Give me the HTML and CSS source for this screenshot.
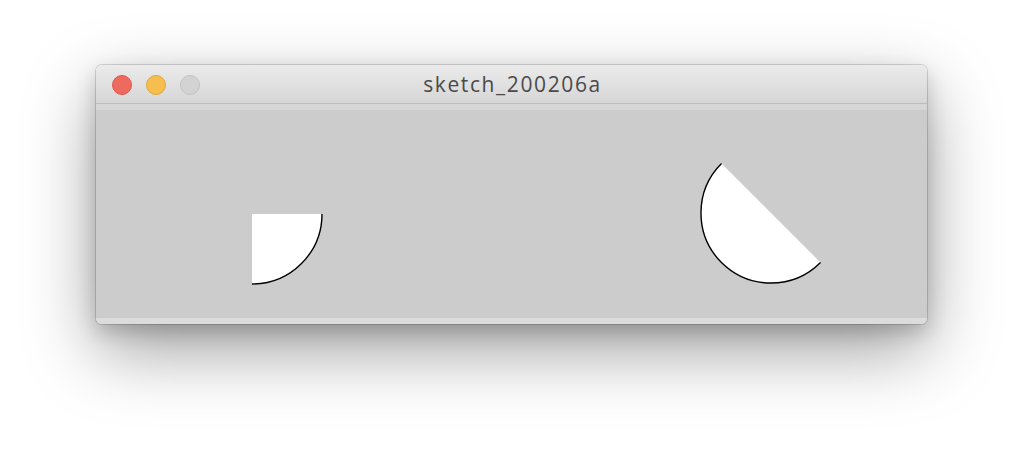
FILE: index.html
```html
<!DOCTYPE html>
<html lang="en">
<head>
    <meta charset="UTF-8">
    <title>sketch_200206a</title>
    <link rel="stylesheet" href="styles.css">
</head>
<body>
    <div class="window">
        <div class="titlebar">
            <div class="lights">
                <span class="light close"></span>
                <span class="light minimize"></span>
                <span class="light zoom"></span>
            </div>
            <div class="title">sketch_200206a</div>
        </div>
        <div class="strip"></div>
        <div class="canvas">
            <svg width="831" height="208" viewBox="0 0 831 208">
                <path d="M156 104 L226 104 A70 70 0 0 1 156 174 Z" fill="#fff"/>
                <path d="M226 104 A70 70 0 0 1 156 174" fill="none" stroke="#000" stroke-width="1.4"/>
                <path d="M724.5 152.5 A70 70 0 1 1 625.5 53.5 Z" fill="#fff"/>
                <path d="M724.5 152.5 A70 70 0 1 1 625.5 53.5" fill="none" stroke="#000" stroke-width="1.4"/>
            </svg>
        </div>
        <div class="strip bottom"></div>
    </div>
</body>
</html>
```

FILE: styles.css
```css
html {
    height: 100%;
}
body {
    margin: 0;
    height: 100%;
    box-sizing: border-box;
    padding: 65px 0 0 96px;
    background-color: #ffffff;
    font-family: "Open Sans", "Liberation Sans", sans-serif;
}
.window {
    width: 831px;
    border-radius: 6px;
    overflow: hidden;
    box-shadow: 0 0 0 1px rgba(0, 0, 0, 0.14), 0 8px 20px rgba(0, 0, 0, 0.18), 0 26px 70px rgba(0, 0, 0, 0.38);
}
.titlebar {
    position: relative;
    height: 38px;
    display: flex;
    align-items: center;
    justify-content: center;
    background: linear-gradient(#ebebeb, #d6d6d6);
    border-bottom: 1px solid #bdbdbd;
}
.lights {
    position: absolute;
    left: 16px;
    top: 10px;
    display: flex;
    gap: 14px;
}
.light {
    width: 20px;
    height: 20px;
    border-radius: 50%;
    box-sizing: border-box;
}
.close {
    background-color: #ee6a5f;
    border: 1px solid #e0574c;
}
.minimize {
    background-color: #f5be4f;
    border: 1px solid #e1a73c;
}
.zoom {
    background-color: #d3d3d3;
    border: 1px solid #c2c2c2;
}
.title {
    font-size: 21px;
    letter-spacing: 1.6px;
    color: #4a4a4a;
    margin-left: 2px;
}
.strip {
    height: 6px;
    background-color: #d6d6d6;
}
.strip.bottom {
    background-color: #dcdcdc;
}
.canvas {
    height: 208px;
    background-color: #cccccc;
}
.canvas svg {
    display: block;
}
```
